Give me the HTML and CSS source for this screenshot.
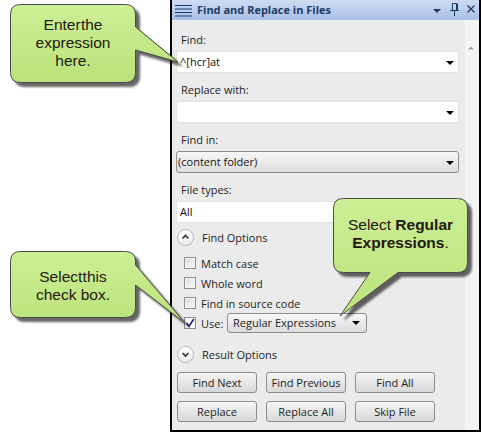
FILE: index.html
```html
<!DOCTYPE html>
<html>
<head>
<meta charset="utf-8">
<link rel="stylesheet" href="styles.css">
</head>
<body>
<div class="screen">
  <div class="gutter"></div>
  <section class="panel">
    <header class="titlebar">
      <svg class="menu-ico" width="18" height="20" viewBox="0 0 18 20">
        <path d="M0 5.5H17M0 9H17M0 12.5H17M0 16H17" stroke="#1e3a66" stroke-width="1"/>
      </svg>
      <span class="title">Find and Replace in Files</span>
      <svg class="tools" width="42" height="20" viewBox="0 0 42 20">
        <path d="M0 9H8L4 13Z" fill="#1e3a66"/>
        <path d="M19.5 3.5H23.5M19.5 3.5V10M23.5 3.5V10M24.5 3.5V10M17 10.5H26M21.5 10.5V16" stroke="#1e3a66" stroke-width="1" fill="none"/>
        <path d="M34.5 5.5L41.5 12.5M41.5 5.5L34.5 12.5" stroke="#1e3a66" stroke-width="1.3"/>
      </svg>
    </header>
    <div class="main">
      <div class="content">
        <div class="field">
          <div class="label">Find:</div>
          <div class="input dd">^[hcr]at</div>
        </div>
        <div class="field">
          <div class="label">Replace with:</div>
          <div class="input dd"></div>
        </div>
        <div class="field">
          <div class="label">Find in:</div>
          <div class="input combo dd">(content folder)</div>
        </div>
        <div class="field">
          <div class="label">File types:</div>
          <div class="input">All</div>
        </div>
        <div class="toggle toggle-find">
          <span class="circle"><svg width="15" height="15" viewBox="0 0 15 15"><path d="M4.5 8.5L7.5 5.5L10.5 8.5" stroke="#333" stroke-width="1.6" fill="none"/></svg></span>
          Find Options
        </div>
        <div class="options">
          <div class="check-row"><span class="cb"></span>Match case</div>
          <div class="check-row"><span class="cb"></span>Whole word</div>
          <div class="check-row"><span class="cb"></span>Find in source code</div>
          <div class="check-row">
            <span class="cb checked"><svg width="10" height="10" viewBox="0 0 10 10"><path d="M1.5 5L4 8.2L8.8 1" stroke="#26267a" stroke-width="1.7" fill="none"/></svg></span>
            <span class="use">Use:</span>
            <span class="select dd">Regular Expressions</span>
          </div>
        </div>
        <div class="toggle toggle-result">
          <span class="circle"><svg width="15" height="15" viewBox="0 0 15 15"><path d="M4.5 6L7.5 9L10.5 6" stroke="#333" stroke-width="1.6" fill="none"/></svg></span>
          Result Options
        </div>
        <div class="buttons">
          <button class="btn">Find Next</button>
          <button class="btn">Find Previous</button>
          <button class="btn">Find All</button>
          <button class="btn">Replace</button>
          <button class="btn">Replace All</button>
          <button class="btn">Skip File</button>
        </div>
      </div>
      <div class="scrollbar">
        <svg width="14" height="20" viewBox="0 0 14 20"><path d="M3 10.5H9L6 7.5Z" fill="#a0a0a0"/></svg>
      </div>
    </div>
  </section>

  <div class="callout c1">
    <svg width="175" height="85" viewBox="0 0 175 85">
      <defs><linearGradient id="g1" x1="0" y1="0" x2="0" y2="1"><stop offset="0" stop-color="#cdef96"/><stop offset="1" stop-color="#bbe27a"/></linearGradient></defs>
      <path d="M10.5 0.5H115.5Q125.5 0.5 125.5 10.5V23L168 58L125.5 46V68.5Q125.5 78.5 115.5 78.5H10.5Q0.5 78.5 0.5 68.5V10.5Q0.5 0.5 10.5 0.5Z" fill="url(#g1)" stroke="#4a4a4a" stroke-width="1"/>
    </svg>
    <div class="txt t1"><span class="tight">Enter the</span><br>expression<br>here.</div>
  </div>

  <div class="callout c2">
    <svg width="180" height="80" viewBox="0 0 180 80">
      <defs><linearGradient id="g2" x1="0" y1="0" x2="0" y2="1"><stop offset="0" stop-color="#cdef96"/><stop offset="1" stop-color="#bbe27a"/></linearGradient></defs>
      <path d="M10.5 0.5H115.5Q125.5 0.5 125.5 10.5V14L175 72L125.5 34V56.5Q125.5 66.5 115.5 66.5H10.5Q0.5 66.5 0.5 56.5V10.5Q0.5 0.5 10.5 0.5Z" fill="url(#g2)" stroke="#4a4a4a" stroke-width="1"/>
    </svg>
    <div class="txt t2"><span class="tight">Select this</span><br>check box.</div>
  </div>

  <div class="callout c3">
    <svg width="140" height="122" viewBox="0 0 140 122">
      <defs><linearGradient id="g3" x1="0" y1="0" x2="0" y2="1"><stop offset="0" stop-color="#cdef96"/><stop offset="1" stop-color="#bbe27a"/></linearGradient></defs>
      <path d="M10.5 0.5H124.5Q134.5 0.5 134.5 10.5V64.5Q134.5 74.5 124.5 74.5H65L7 118L37 74.5H10.5Q0.5 74.5 0.5 64.5V10.5Q0.5 0.5 10.5 0.5Z" fill="url(#g3)" stroke="#4a4a4a" stroke-width="1"/>
    </svg>
    <div class="txt t3">Select <b>Regular</b><br><b>Expressions</b>.</div>
  </div>
</div>
</body>
</html>
```

FILE: styles.css
```css
body {
  margin: 0;
  background: #fff;
  font-family: "Open Sans", "DejaVu Sans", sans-serif;
}

.screen {
  position: relative;
  width: 481px;
  height: 433px;
  display: flex;
  overflow: hidden;
}

.gutter {
  width: 170px;
  flex: none;
}

.panel {
  width: 311px;
  height: 432px;
  flex: none;
  box-sizing: border-box;
  border: 2px solid #000;
  border-top: 0;
  display: flex;
  flex-direction: column;
  background: #ebebeb;
}

.titlebar {
  height: 20px;
  flex: none;
  display: flex;
  align-items: center;
  padding: 0 4px 0 3px;
  background: linear-gradient(#cddcf3, #a9c0e6);
}

.menu-ico {
  display: block;
  flex: none;
}

.title {
  margin-left: 4px;
  font-size: 11px;
  font-weight: 700;
  color: #1e3a66;
  line-height: 20px;
}

.tools {
  display: block;
  margin-left: auto;
}

.main {
  flex: 1;
  display: flex;
}

.content {
  flex: 1;
  padding: 12px 6px 0 4px;
  font-size: 11px;
  color: #1e1e1e;
}

.scrollbar {
  width: 14px;
  flex: none;
  background: #f4f4f4;
}

.scrollbar svg {
  display: block;
  margin-top: 19px;
}

.label {
  line-height: 15px;
  padding-left: 5px;
  margin-bottom: 4px;
}

.field + .field {
  margin-top: 9px;
}

.input {
  position: relative;
  height: 22px;
  box-sizing: border-box;
  background: #fff;
  border: 1px solid #e2e2e2;
  line-height: 20px;
  padding-left: 3px;
  color: #111;
}

.combo {
  border: 1px solid #8c8c8c;
  border-radius: 3px;
  background: linear-gradient(#f7f7f7, #dedede);
  padding-left: 1px;
}

.dd::after {
  content: "";
  position: absolute;
  right: 4px;
  top: 9px;
  border-left: 4px solid transparent;
  border-right: 4px solid transparent;
  border-top: 4px solid #000;
}

.toggle {
  display: flex;
  align-items: center;
  height: 16px;
  padding-left: 1px;
  gap: 8px;
}

.toggle-find {
  margin-top: 6px;
}

.toggle-result {
  margin-top: 13px;
}

.circle {
  width: 15px;
  height: 15px;
  border: 1px solid #b5b5b5;
  border-radius: 50%;
  background: linear-gradient(#ffffff, #ececec);
  display: flex;
}

.circle svg {
  display: block;
}

.options {
  margin-top: 8px;
}

.check-row {
  display: flex;
  align-items: center;
  height: 20px;
  padding-left: 8px;
  gap: 5px;
}

.cb {
  width: 12px;
  height: 12px;
  box-sizing: border-box;
  border: 1px solid #8e8e8e;
  background: linear-gradient(135deg, #d9d9d9, #fbfbfb);
  box-shadow: inset 0 0 0 1px #f4f4f4;
  display: flex;
  align-items: center;
  justify-content: center;
}

.cb.checked {
  background: #fff;
}

.cb svg {
  display: block;
}

.use {
  width: 21px;
}

.select {
  position: relative;
  width: 140px;
  height: 20px;
  box-sizing: border-box;
  border: 1px solid #8c8c8c;
  border-radius: 3px;
  background: linear-gradient(#f7f7f7, #dcdcdc);
  line-height: 18px;
  padding-left: 5px;
}

.select.dd::after {
  right: 6px;
  top: 7px;
}

.buttons {
  margin-top: 10px;
  padding-left: 1px;
  display: grid;
  grid-template-columns: repeat(3, 80px);
  column-gap: 9px;
  row-gap: 8px;
}

.btn {
  height: 21px;
  margin: 0;
  padding: 0;
  border: 1px solid #8c8c8c;
  border-radius: 3px;
  background: linear-gradient(#f5f5f5, #d8d8d8);
  font-family: "Open Sans", "DejaVu Sans", sans-serif;
  font-size: 11px;
  color: #1e1e1e;
  line-height: 19px;
}

.callout {
  position: absolute;
}

.callout svg {
  position: absolute;
  left: 0;
  top: 0;
  overflow: visible;
  filter: drop-shadow(4px 4px 1px rgba(0, 0, 0, 0.6));
}

.callout .txt {
  position: absolute;
  left: 0;
  text-align: center;
  font-family: "Liberation Sans", Arial, sans-serif;
  font-size: 15.5px;
  line-height: 18px;
  color: #22180e;
}

.tight {
  word-spacing: -4px;
}

.c1 {
  left: 10px;
  top: 4px;
}

.t1 {
  top: 12px;
  width: 126px;
}

.c2 {
  left: 10px;
  top: 251px;
}

.t2 {
  top: 17px;
  width: 126px;
}

.c3 {
  left: 333px;
  top: 198px;
}

.t3 {
  top: 18px;
  width: 135px;
}
```
